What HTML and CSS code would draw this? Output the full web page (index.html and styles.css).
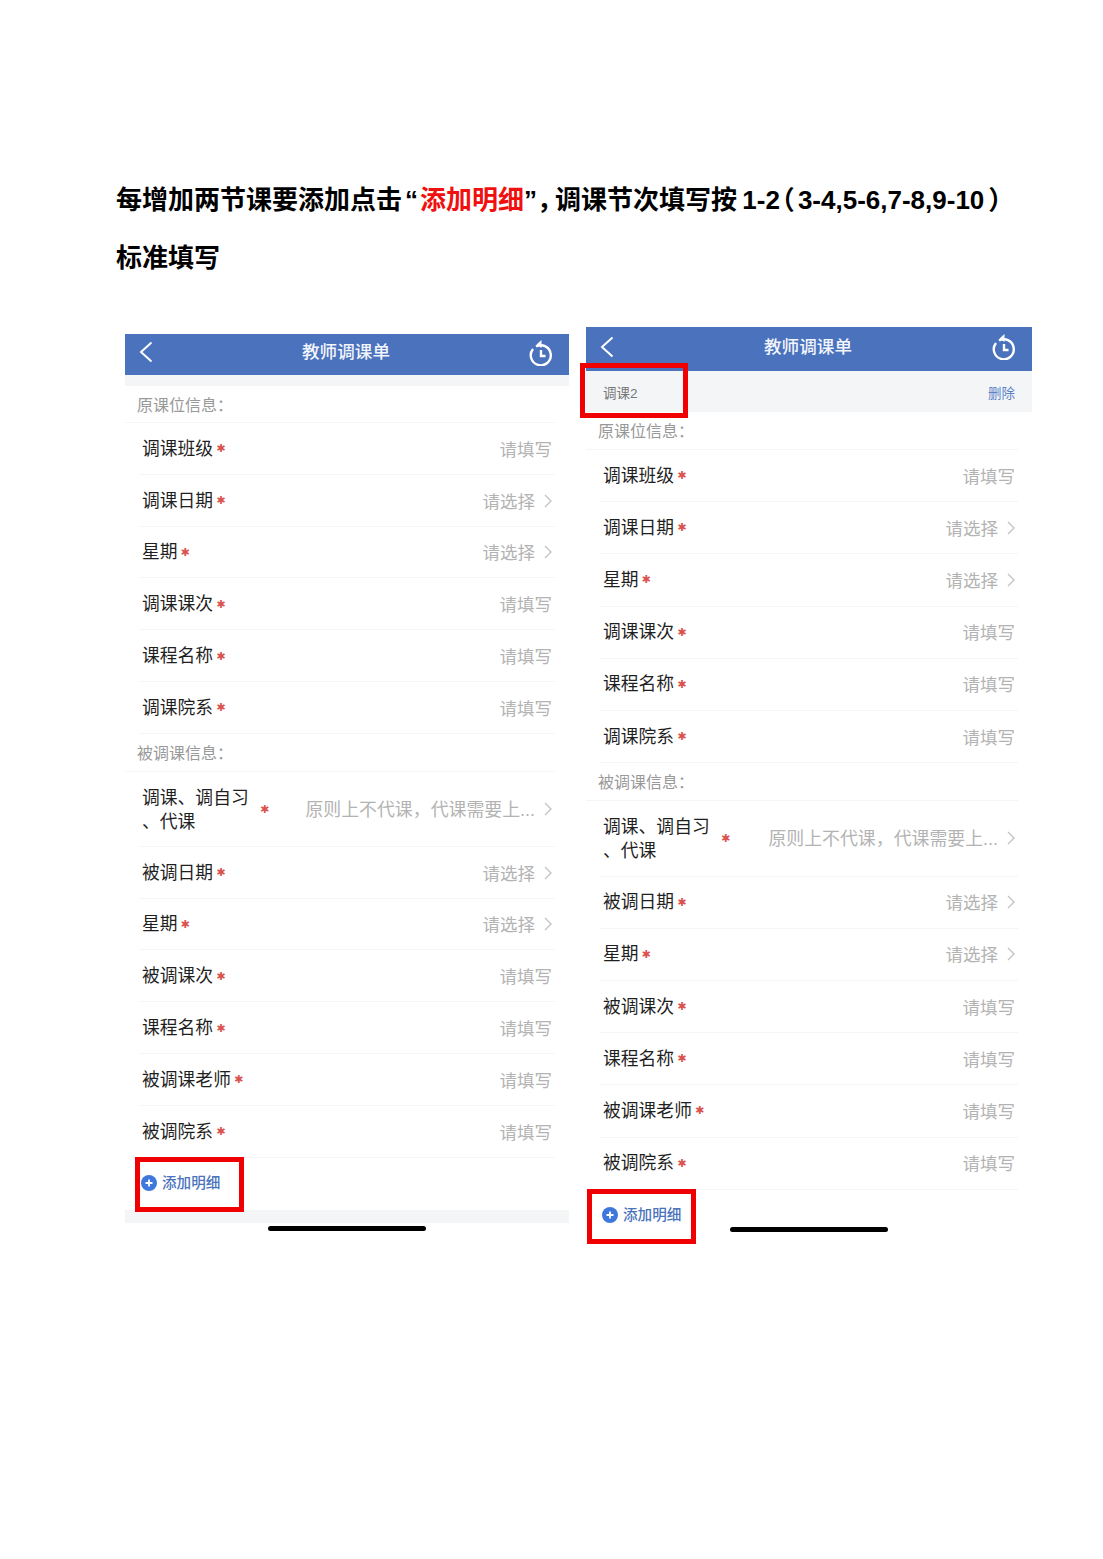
FILE: index.html
```html
<!DOCTYPE html>
<html lang="zh-CN">
<head>
<meta charset="utf-8">
<title>教师调课单</title>
<link rel="stylesheet" href="styles.css">
</head>
<body>
<main class="page">
  <h1 class="doc-title">每增加两节课要添加点击<span class="q-open">“</span><span class="hl">添加明细</span>”<span class="comma">，</span>调课节次填写按 1-2<span class="paren-l">（</span>3-4,5-6,7-8,9-10<span class="paren-r">）</span><br>标准填写</h1>
  <div class="shots">
    <section class="phone phone-a">
      <header class="nav">
        <svg class="back" viewBox="0 0 14 22"><path d="M12.500 1.500 2 11l10.500 9.500"/></svg>
        <span class="nav-title">教师调课单</span>
        <svg class="hist" viewBox="0 0 24 26"><path d="M7 6.500a10 10 0 1 1-3 2.500"/><path class="fill" d="M12.500 0v8L7.500 4.500z"/><path d="M12 10v6h4.500"/></svg>
      </header>
      <div class="strip"></div>
      <div class="sec">原课位信息：</div>
      <div class="row"><span class="lab">调课班级</span><i class="star">✱</i><span class="val">请填写</span></div>
      <div class="row"><span class="lab">调课日期</span><i class="star">✱</i><span class="val">请选择</span><svg class="chev" viewBox="0 0 8 14"><path d="M1 1l6 6-6 6"/></svg></div>
      <div class="row"><span class="lab">星期</span><i class="star">✱</i><span class="val">请选择</span><svg class="chev" viewBox="0 0 8 14"><path d="M1 1l6 6-6 6"/></svg></div>
      <div class="row"><span class="lab">调课课次</span><i class="star">✱</i><span class="val">请填写</span></div>
      <div class="row"><span class="lab">课程名称</span><i class="star">✱</i><span class="val">请填写</span></div>
      <div class="row"><span class="lab">调课院系</span><i class="star">✱</i><span class="val">请填写</span></div>
      <div class="sec sec-b">被调课信息：</div>
      <div class="row row-tall"><span class="lab lab-wrap">调课、调自习<br>、代课</span><i class="star">✱</i><span class="val">原则上不代课，代课需要上...</span><svg class="chev" viewBox="0 0 8 14"><path d="M1 1l6 6-6 6"/></svg></div>
      <div class="row"><span class="lab">被调日期</span><i class="star">✱</i><span class="val">请选择</span><svg class="chev" viewBox="0 0 8 14"><path d="M1 1l6 6-6 6"/></svg></div>
      <div class="row"><span class="lab">星期</span><i class="star">✱</i><span class="val">请选择</span><svg class="chev" viewBox="0 0 8 14"><path d="M1 1l6 6-6 6"/></svg></div>
      <div class="row"><span class="lab">被调课次</span><i class="star">✱</i><span class="val">请填写</span></div>
      <div class="row"><span class="lab">课程名称</span><i class="star">✱</i><span class="val">请填写</span></div>
      <div class="row"><span class="lab">被调课老师</span><i class="star">✱</i><span class="val">请填写</span></div>
      <div class="row"><span class="lab">被调院系</span><i class="star">✱</i><span class="val">请填写</span></div>
      <div class="add"><svg class="plus" viewBox="0 0 16 16"><circle cx="8" cy="8" r="8"/><path d="M4.500 8h7M8 4.500v7"/></svg><span class="add-text">添加明细</span></div>
      <div class="foot"></div>
      <div class="home"></div>
      <div class="mark mark-add"></div>
    </section>
    <section class="phone phone-b">
      <header class="nav">
        <svg class="back" viewBox="0 0 14 22"><path d="M12.500 1.500 2 11l10.500 9.500"/></svg>
        <span class="nav-title">教师调课单</span>
        <svg class="hist" viewBox="0 0 24 26"><path d="M7 6.500a10 10 0 1 1-3 2.500"/><path class="fill" d="M12.500 0v8L7.500 4.500z"/><path d="M12 10v6h4.500"/></svg>
      </header>
      <div class="item-bar"><span>调课2</span><span class="del">删除</span></div>
      <div class="sec">原课位信息：</div>
      <div class="row"><span class="lab">调课班级</span><i class="star">✱</i><span class="val">请填写</span></div>
      <div class="row"><span class="lab">调课日期</span><i class="star">✱</i><span class="val">请选择</span><svg class="chev" viewBox="0 0 8 14"><path d="M1 1l6 6-6 6"/></svg></div>
      <div class="row"><span class="lab">星期</span><i class="star">✱</i><span class="val">请选择</span><svg class="chev" viewBox="0 0 8 14"><path d="M1 1l6 6-6 6"/></svg></div>
      <div class="row"><span class="lab">调课课次</span><i class="star">✱</i><span class="val">请填写</span></div>
      <div class="row"><span class="lab">课程名称</span><i class="star">✱</i><span class="val">请填写</span></div>
      <div class="row"><span class="lab">调课院系</span><i class="star">✱</i><span class="val">请填写</span></div>
      <div class="sec sec-b">被调课信息：</div>
      <div class="row row-tall"><span class="lab lab-wrap">调课、调自习<br>、代课</span><i class="star">✱</i><span class="val">原则上不代课，代课需要上...</span><svg class="chev" viewBox="0 0 8 14"><path d="M1 1l6 6-6 6"/></svg></div>
      <div class="row"><span class="lab">被调日期</span><i class="star">✱</i><span class="val">请选择</span><svg class="chev" viewBox="0 0 8 14"><path d="M1 1l6 6-6 6"/></svg></div>
      <div class="row"><span class="lab">星期</span><i class="star">✱</i><span class="val">请选择</span><svg class="chev" viewBox="0 0 8 14"><path d="M1 1l6 6-6 6"/></svg></div>
      <div class="row"><span class="lab">被调课次</span><i class="star">✱</i><span class="val">请填写</span></div>
      <div class="row"><span class="lab">课程名称</span><i class="star">✱</i><span class="val">请填写</span></div>
      <div class="row"><span class="lab">被调课老师</span><i class="star">✱</i><span class="val">请填写</span></div>
      <div class="row"><span class="lab">被调院系</span><i class="star">✱</i><span class="val">请填写</span></div>
      <div class="add"><svg class="plus" viewBox="0 0 16 16"><circle cx="8" cy="8" r="8"/><path d="M4.500 8h7M8 4.500v7"/></svg><span class="add-text">添加明细</span></div>
      <div class="home"></div>
      <div class="mark mark-item"></div>
      <div class="mark mark-add"></div>
    </section>
  </div>
</main>
</body>
</html>
```
FILE: styles.css
```css
* { box-sizing: border-box; }
html, body { margin: 0; background: #fff; }
body { font-family: "Liberation Sans", "Noto Sans CJK SC", sans-serif; color: #222; }
.page { height: 1559px; padding: 171px 0 0; overflow: hidden; }
.doc-title { margin: 0; padding-left: 116px; font-size: 26px; line-height: 58px; font-weight: 700; color: #000; white-space: nowrap; word-spacing: -2px; }
.hl { color: #f01010; }
.q-open { margin-left: 3px; margin-right: 2px; }
.comma, .paren-l, .paren-r { font-feature-settings: "halt"; }
.comma { margin-right: 5px; }
.paren-l { margin-left: 2px; margin-right: 3px; }
.paren-r { margin-left: 4px; }
.shots { display: flex; align-items: flex-start; gap: 17px; padding: 40px 0 0 125px; }
.phone { position: relative; flex: none; background: #fff; }
.phone-a { width: 444px; margin-top: 7px; --row: 51.800px; --tall: 75px; }
.phone-b { width: 446px; --row: 52.200px; --tall: 75.500px; }
.nav { display: grid; grid-template-columns: 1fr auto 1fr; align-items: center; padding: 0 16px 0 14px; background: #4a72bd; color: #fff; }
.phone-a .nav { height: 41px; }
.phone-b .nav { height: 44px; }
.back { width: 14px; height: 22px; margin-bottom: 5px; fill: none; stroke: #fff; stroke-width: 2; }
.nav-title { margin-bottom: 5px; font-size: 17.600px; line-height: 24px; font-weight: 500; color: #f2f5fb; }
.hist { justify-self: end; width: 24px; height: 26px; margin-bottom: 4px; fill: none; stroke: #fff; stroke-width: 2.400; }
.hist .fill { fill: #fff; stroke: none; }
.strip { height: 11px; background: #f3f5f7; }
.item-bar { display: flex; justify-content: space-between; align-items: center; height: 41px; padding: 0 17px; background: #f3f5f7; font-size: 13.500px; color: #777; }
.del { color: #5b82c9; }
.sec { height: 37px; padding: 9px 0 0 12px; font-size: 16px; line-height: 22px; color: #999; border-bottom: 1px solid #f5f5f5; margin-right: 14px; }
.phone-b .sec { height: 38px; }
.sec-b { height: 38px; padding-top: 9px; }
.row { display: flex; align-items: center; height: var(--row); margin: 0 14px; padding: 1px 3px 0; border-bottom: 1px solid #f5f5f5; }
.phone-b .row { padding-top: 0; }
.row-tall { height: var(--tall); }
.lab { font-size: 17.800px; line-height: 24px; color: #1f1f1f; white-space: nowrap; }
.lab-wrap { width: 108px; margin: 2px 7px 0 0; }
.star { margin-left: 3px; width: 9px; font: normal 11px/1 "DejaVu Sans", sans-serif; color: #d9534f; }
.val { margin-left: auto; padding-top: 2px; font-size: 17.500px; line-height: 24px; color: #b3b3b3; white-space: nowrap; }
.row-tall .val { font-size: 17.900px; }
.chev { flex: none; width: 8px; height: 14px; margin-left: 9px; fill: none; stroke: #c4c4c4; stroke-width: 1.400; }
.add { display: flex; align-items: center; gap: 5px; height: 52px; padding: 0 0 2px 16px; font-size: 14.600px; font-weight: 500; color: #4a72bd; }
.add-text { margin-bottom: 2px; }
.plus { width: 16px; height: 16px; }
.plus circle { fill: #3f78dc; }
.plus path { stroke: #fff; stroke-width: 1.800; fill: none; }
.foot { height: 13px; background: #f3f5f7; }
.home { position: absolute; width: 158px; height: 5px; border-radius: 3px; background: #000; }
.phone-a .home { left: 143px; top: 892px; }
.phone-b .home { left: 144px; top: 900px; }
.mark { position: absolute; width: 109px; height: 55px; border: 5px solid #f00000; }
.phone-a .mark-add { left: 10px; top: 823px; }
.mark-item { left: -6px; top: 36px; width: 108px; }
.phone-b .mark-add { left: 1px; top: 862px; }
```
